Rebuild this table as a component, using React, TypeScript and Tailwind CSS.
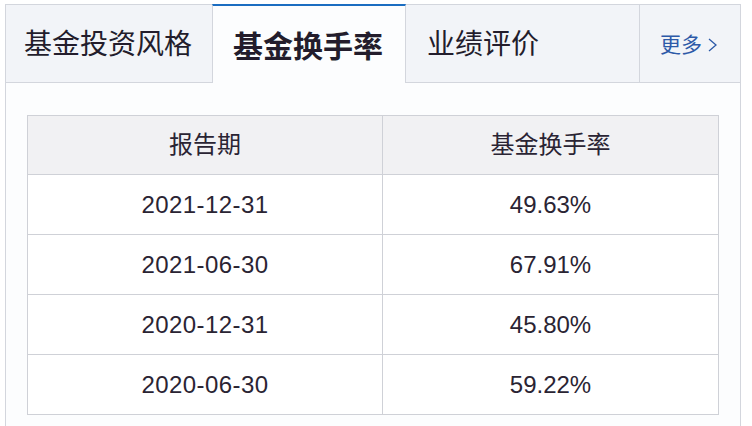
import React from "react";

const rows = [
  ["2021-12-31", "49.63%"],
  ["2021-06-30", "67.91%"],
  ["2020-12-31", "45.80%"],
  ["2020-06-30", "59.22%"],
];

const font = { fontFamily: '"Liberation Sans", "Noto Sans CJK SC", sans-serif' };

export default function App() {
  return (
    <div className="w-[752px] h-[426px] overflow-hidden bg-white" style={font}>
      <div className="ml-[5px] mt-[4px] w-[736px] h-[440px] border-l border-r border-[#d3d6dd] bg-[#fcfdfe]">
        <div className="flex h-[79px]">
          <div className="w-[206px] h-full border-t border-b border-[#d3d6dd] bg-[#f2f4f8] flex items-center justify-center text-[28px] text-[#231d2c] pr-[2px] pt-[2px]">
            基金投资风格
          </div>
          <div className="w-[194px] h-full border-t-2 border-t-[#1b6dc1] border-l border-r border-[#d3d6dd] bg-[#fcfdfe] flex items-center justify-center text-[30px] font-bold text-[#231d2c] pt-[4px] pr-[2px]">
            基金换手率
          </div>
          <div className="w-[233px] h-full border-t border-b border-[#d3d6dd] bg-[#f2f4f8] flex items-center pl-[21px] pt-[2px] text-[28px] text-[#231d2c]">
            业绩评价
          </div>
          <div className="w-[101px] h-full border-t border-b border-l border-[#d3d6dd] bg-[#f2f4f8] flex items-center pl-[20px] pt-[2px] text-[21px] text-[#2d5aa8]">
            <span>更多</span>
            <svg width="12" height="16" viewBox="0 0 12 16" className="ml-[4px]">
              <path d="M3 2 L10 8 L3 14" fill="none" stroke="#2d5aa8" strokeWidth="1.3" />
            </svg>
          </div>
        </div>
        <div className="pt-[32px] pl-[21px]">
          <div className="w-[692px] border border-[#cfd1d7] text-[24px] text-[#2a2433]">
            <div className="grid grid-cols-[355px_335px] h-[59px] border-b border-[#cfd1d7] bg-[#f1f1f3]">
              <div className="border-r border-[#cfd1d7] flex items-center justify-center">报告期</div>
              <div className="flex items-center justify-center">基金换手率</div>
            </div>
            {rows.map((r, i) => (
              <div
                key={i}
                className={`grid grid-cols-[355px_335px] bg-white ${i < rows.length - 1 ? "h-[60px] border-b border-[#cfd1d7]" : "h-[59px]"}`}
              >
                <div className="border-r border-[#cfd1d7] flex items-center justify-center tracking-[0.4px]">{r[0]}</div>
                <div className="flex items-center justify-center">{r[1]}</div>
              </div>
            ))}
          </div>
        </div>
      </div>
    </div>
  );
}
